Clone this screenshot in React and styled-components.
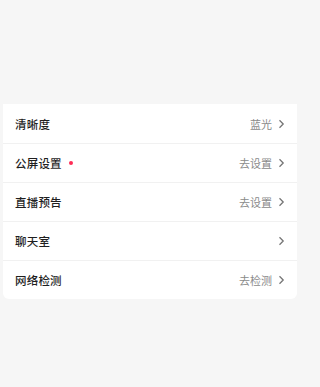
import React from 'react';
import styled, { createGlobalStyle } from 'styled-components';

const GlobalStyle = createGlobalStyle`
  html, body {
    margin: 0;
    padding: 0;
    background: #f6f6f6;
    font-family: "Noto Sans CJK SC", "Noto Sans", sans-serif;
  }
`;

const Page = styled.div`
  width: 300px;
  height: 387px;
  box-sizing: border-box;
  padding: 104px 3px 0;
  background: #f6f6f6;
`;

const Card = styled.div`
  background: #fff;
  border-radius: 0 0 6px 6px;
  overflow: hidden;
`;

const Row = styled.div`
  display: flex;
  align-items: center;
  height: 39px;
  box-sizing: border-box;
  padding: 0 12px 0 12px;
  border-top: ${p => (p.first ? 'none' : '1px solid #f1f1f1')};
`;

const Label = styled.span`
  font-size: 11.5px;
  font-weight: 500;
  color: #1f1f1f;
  letter-spacing: 0.2px;
`;

const Dot = styled.span`
  width: 4px;
  height: 4px;
  border-radius: 50%;
  background: #fe2c55;
  margin-left: 7px;
`;

const Value = styled.span`
  margin-left: auto;
  font-size: 11px;
  color: #8a8a8a;
`;

const Chevron = styled.svg`
  width: 7px;
  height: 10px;
  margin-left: 6px;
  flex-shrink: 0;
`;

const rows = [
  { label: '清晰度', value: '蓝光' },
  { label: '公屏设置', value: '去设置', dot: true },
  { label: '直播预告', value: '去设置' },
  { label: '聊天室', value: '' },
  { label: '网络检测', value: '去检测' },
];

export default function App() {
  return (
    <>
      <GlobalStyle />
      <Page>
        <Card>
          {rows.map((r, i) => (
            <Row key={r.label} first={i === 0}>
              <Label>{r.label}</Label>
              {r.dot && <Dot />}
              <Value>{r.value}</Value>
              <Chevron viewBox="0 0 7 10">
                <polyline points="1.5 1.2 5.2 5 1.5 8.8" fill="none" stroke="#777" strokeWidth="1.3" />
              </Chevron>
            </Row>
          ))}
        </Card>
      </Page>
    </>
  );
}
